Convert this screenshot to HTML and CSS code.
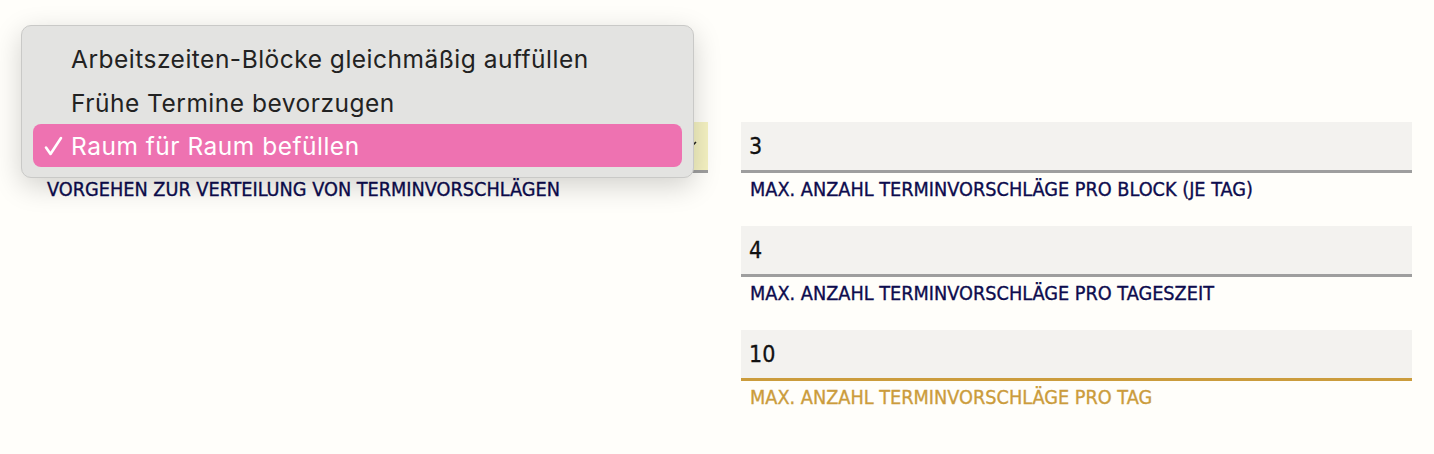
FILE: index.html
```html
<!DOCTYPE html>
<html lang="de">
<head>
<meta charset="utf-8">
<title>Einstellungen</title>
<link rel="stylesheet" href="styles.css">
</head>
<body>
<div class="page">
  <div class="col">
    <div class="field">
      <div class="select">
        <span class="select-value">Raum für Raum befüllen</span>
        <svg class="chev" width="14" height="10" viewBox="0 0 14 10"><path d="M2 3 L7 8 L12 3" fill="none" stroke="#222" stroke-width="1.6"/></svg>
      </div>
      <div class="label">Vorgehen zur Verteilung von Terminvorschlägen</div>
    </div>
  </div>
  <div class="col">
    <div class="field">
      <div class="input">3</div>
      <div class="label">Max. Anzahl Terminvorschläge pro Block (je Tag)</div>
    </div>
    <div class="field">
      <div class="input">4</div>
      <div class="label">Max. Anzahl Terminvorschläge pro Tageszeit</div>
    </div>
    <div class="field focused">
      <div class="input">10</div>
      <div class="label">Max. Anzahl Terminvorschläge pro Tag</div>
    </div>
  </div>
</div>
<div class="menu">
  <div class="item"><span class="check"></span>Arbeitszeiten-Blöcke gleichmäßig auffüllen</div>
  <div class="item"><span class="check"></span>Frühe Termine bevorzugen</div>
  <div class="item selected"><span class="check"><svg width="19" height="20" viewBox="0 0 19 20"><path d="M2 11.5 L6.5 18 L17 2" fill="none" stroke="#fff" stroke-width="2.6" stroke-linecap="round" stroke-linejoin="round"/></svg></span>Raum für Raum befüllen</div>
</div>
</body>
</html>
```
FILE: styles.css
```css
html, body {
  margin: 0;
  padding: 0;
}
body {
  background: #fffefa;
  width: 1434px;
  height: 454px;
  overflow: hidden;
  position: relative;
  font-family: "Noto Sans", "DejaVu Sans", sans-serif;
}
.page {
  display: flex;
  gap: 33px;
  padding: 122px 0 0 37px;
}
.col {
  width: 671px;
  display: flex;
  flex-direction: column;
  gap: 25px;
}
.field {
  display: flex;
  flex-direction: column;
}
.input, .select {
  height: 51px;
  box-sizing: border-box;
  background: #f3f2ef;
  border-bottom: 3px solid #9e9e9e;
  padding: 0 0 0 8px;
  display: flex;
  align-items: center;
  font-family: "DejaVu Sans Condensed", "Noto Sans", sans-serif;
  font-stretch: condensed;
  font-size: 23px;
  color: #111;
  -webkit-text-stroke: 0.3px #111;
}
.select {
  background: #f5f2c2;
  justify-content: space-between;
  padding-right: 10px;
}
.chev { margin-top: -4px; }
.label {
  margin-top: 6px;
  padding-left: 9px;
  text-transform: uppercase;
  font-family: "DejaVu Sans Condensed", "Noto Sans", sans-serif;
  font-stretch: condensed;
  font-size: 19.7px;
  color: #0d0c4e;
  -webkit-text-stroke: 0.35px #0d0c4e;
  line-height: 22px;
}
.col:first-child .label { padding-left: 10px; }
.focused .input { border-bottom-color: #cb9c3c; }
.focused .label { color: #cb9c3c; -webkit-text-stroke-color: #cb9c3c; }

.menu {
  position: absolute;
  left: 21px;
  top: 25px;
  width: 673px;
  height: 153px;
  box-sizing: border-box;
  background: #e3e3e1;
  border: 1px solid #c9c9c7;
  border-radius: 10px;
  box-shadow: 0 8px 28px rgba(0,0,0,0.18);
  padding: 11px 11px;
  display: flex;
  flex-direction: column;
  font-family: "Inter", "Liberation Sans", sans-serif;
  font-size: 24.5px;
  letter-spacing: 0.5px;
  color: #222;
}
.item {
  height: 43px;
  flex: none;
  display: flex;
  align-items: center;
  border-radius: 8px;
}
.item:first-child { height: 44px; }
.check {
  width: 38px;
  padding-left: 11px;
  box-sizing: border-box;
  flex: none;
  display: flex;
  align-items: center;
}
.item.selected {
  background: #ee72b1;
  color: #fff;
}
```
